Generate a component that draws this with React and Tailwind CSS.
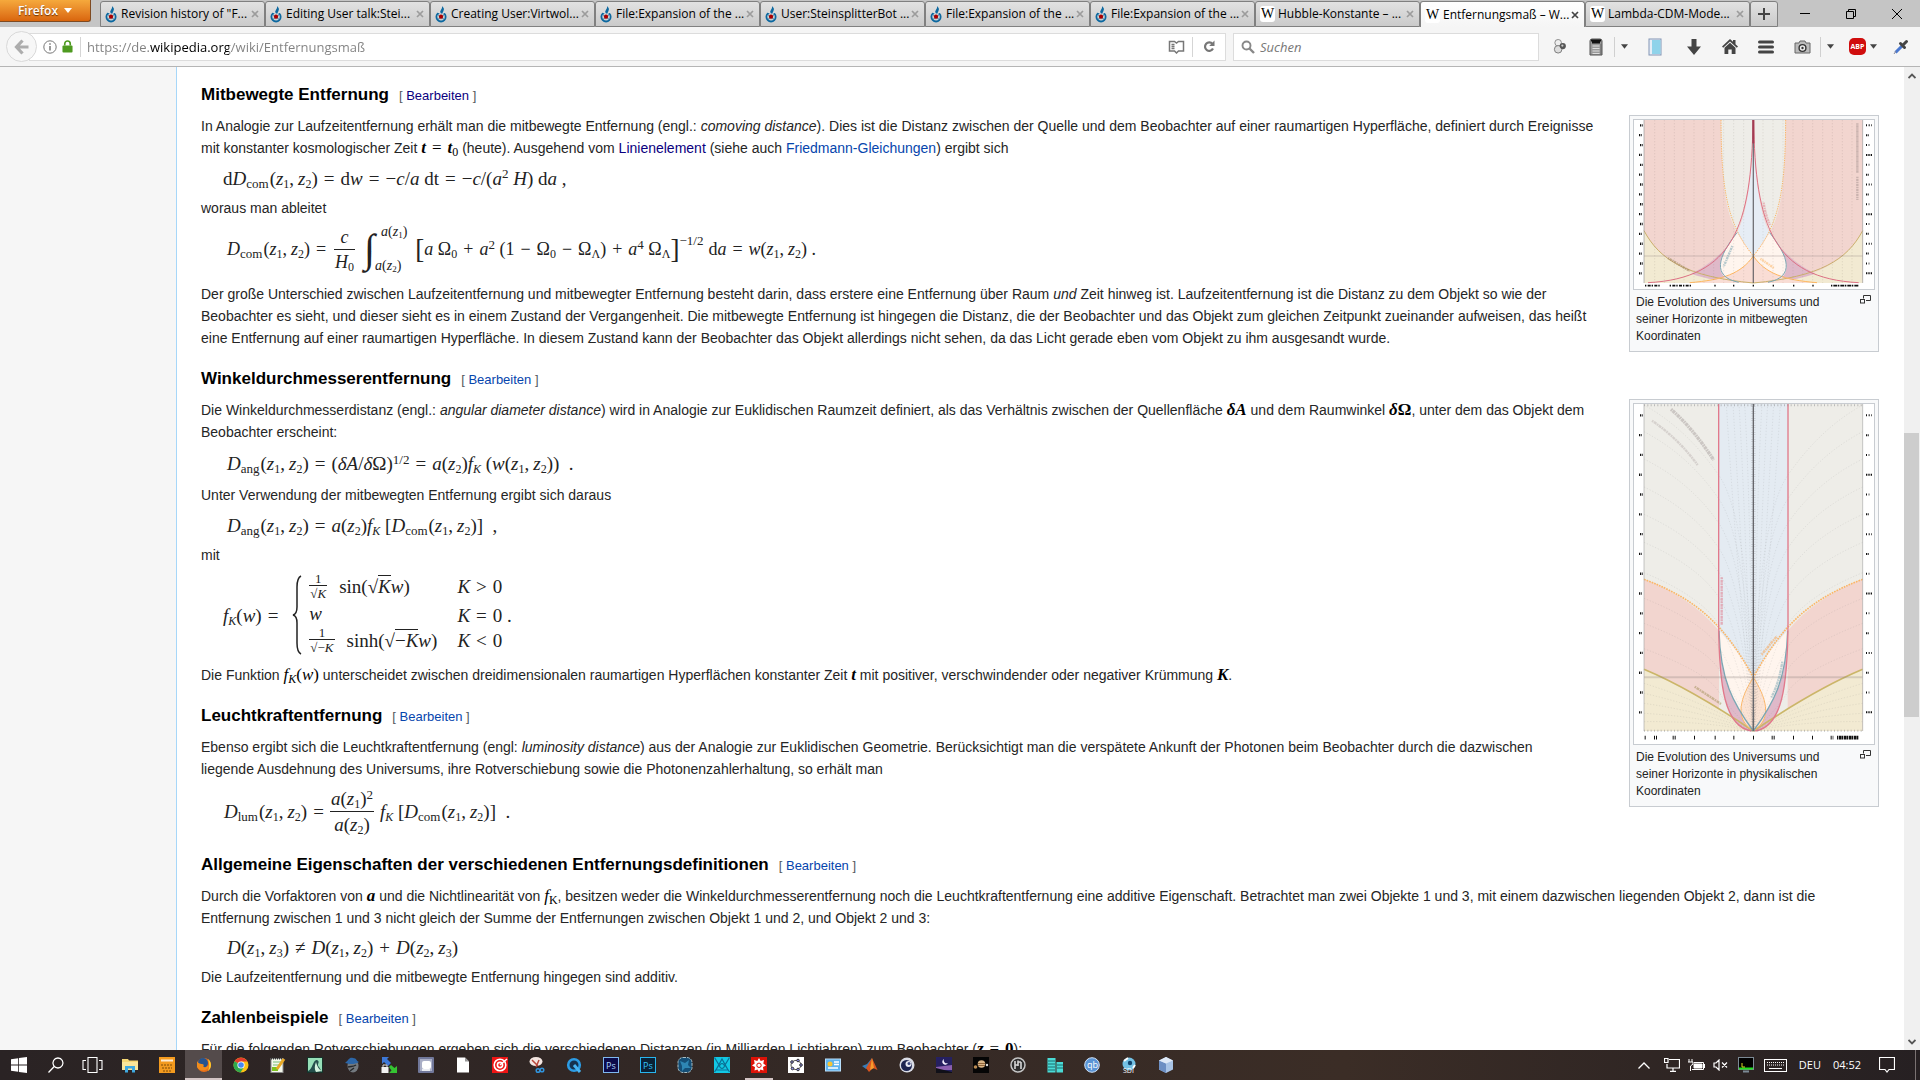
import React from "react";

/* ---------- browser chrome ---------- */

const tabs = [
  { icon: "c", title: 'Revision history of "F...' },
  { icon: "c", title: "Editing User talk:Stei..." },
  { icon: "c", title: "Creating User:Virtwol..." },
  { icon: "c", title: "File:Expansion of the ..." },
  { icon: "c", title: "User:SteinsplitterBot ..." },
  { icon: "c", title: "File:Expansion of the ..." },
  { icon: "c", title: "File:Expansion of the ..." },
  { icon: "w", title: "Hubble-Konstante – ..." },
  { icon: "w", title: "Entfernungsmaß – W...", active: true },
  { icon: "w", title: "Lambda-CDM-Mode..." },
];

function Commons() {
  return (
    <svg viewBox="1 0 13 18" className="h-[17px] w-[13px] shrink-0" aria-hidden="true">
      <circle cx="7" cy="11.5" r="4.9" fill="none" stroke="#0b68a0" strokeWidth="1.9" />
      <path d="M3 7 L8 9 L13 6 L11 5 L8.500 6.500 L5 5 Z" fill="#dcdcdc" />
      <path d="M7 8 C4.500 5 9 3.500 8 0 C12 3.500 9 5 8.600 8 Z" fill="#0b68a0" />
      <circle cx="7" cy="11.300" r="2.300" fill="#a00" />
      <path d="M3.500 9 l1.500 1 M10.500 9 l-1.500 1 M4 14 l1.500 -1 M10 14 l-1.500 -1" stroke="#0b68a0" />
    </svg>
  );
}

function WikiW() {
  return (
    <span className="flex h-4 w-[15px] shrink-0 items-center justify-center rounded-[3px] bg-white font-['Liberation_Serif',serif] text-[14px] leading-none text-black" aria-hidden="true">
      W
    </span>
  );
}

function Tab({ tab }) {
  return (
    <div
      className={
        "flex h-[26px] max-w-[165px] min-w-0 flex-1 items-center rounded-t-[3px] border-t border-r border-l pr-[5px] pl-[4px] " +
        (tab.active
          ? "border-[#808080] bg-linear-to-b from-white to-[#f5f5f5]"
          : "border-b border-[#808080] bg-linear-to-b from-[#e2e2e2] to-[#cacaca]")
      }
    >
      <button className="flex min-w-0 flex-1 items-center gap-[3px] text-left">
        {tab.icon === "c" ? <Commons /> : <WikiW />}
        <span className="text-[12px] leading-4 whitespace-nowrap text-black">{tab.title}</span>
      </button>
      <button aria-label="Tab schließen" className="flex h-3 w-2 shrink-0 items-center justify-center">
        <svg viewBox="0 0 8 8" className="h-2 w-2">
          <path d="M1 1 L7 7 M7 1 L1 7" stroke={tab.active ? "#444" : "#9c9c9c"} strokeWidth="1.7" />
        </svg>
      </button>
    </div>
  );
}

function TabBar() {
  return (
    <div className="flex h-[27px] shrink-0 items-start bg-[#c5c5c5]">
      <button className="mr-[9px] flex h-[22px] w-[91px] shrink-0 items-center justify-center gap-[6px] rounded-br-[3px] border-r border-b border-[#7e4a22] bg-linear-to-b from-[#f5a93c] to-[#d9650c] text-[12px] font-semibold text-white [text-shadow:0_1px_1px_#6b3305]">
        Firefox
        <svg viewBox="0 0 8 5" className="h-[5px] w-2"><path d="M0 0 H8 L4 5 Z" fill="#fff" /></svg>
      </button>
      <div className="flex min-w-0 flex-1 items-end pt-px">
        {tabs.map((t, i) => <Tab key={i} tab={t} />)}
        <button aria-label="Neuer Tab" className="flex h-[26px] w-7 shrink-0 items-center justify-center rounded-t-[3px] border border-[#808080] bg-linear-to-b from-[#e2e2e2] to-[#cacaca]">
          <svg viewBox="0 0 12 12" className="h-3 w-3"><path d="M6 0 V12 M0 6 H12" stroke="#444" strokeWidth="2" /></svg>
        </button>
      </div>
      <div className="flex h-[27px] shrink-0 items-center">
        <button aria-label="Minimieren" className="flex w-[46px] justify-center">
          <svg viewBox="0 0 10 10" className="h-[10px] w-[10px]"><path d="M0 4.500 H10" stroke="#000" /></svg>
        </button>
        <button aria-label="Verkleinern" className="flex w-[46px] justify-center">
          <svg viewBox="0 0 10 10" className="h-[10px] w-[10px]"><path d="M.5 2.500 H7.500 V9.500 H.5 Z M2.500 2.500 V.5 H9.500 V7.500 H7.500" fill="none" stroke="#000" /></svg>
        </button>
        <button aria-label="Schließen" className="flex w-[46px] justify-center">
          <svg viewBox="0 0 10 10" className="h-[10px] w-[10px]"><path d="M0 0 L10 10 M10 0 L0 10" stroke="#000" /></svg>
        </button>
      </div>
    </div>
  );
}

function Caret() {
  return <svg viewBox="0 0 8 5" className="h-[5px] w-[7px]"><path d="M0 0 H8 L4 5 Z" fill="#444" /></svg>;
}

const tool = "flex h-7 w-9 shrink-0 items-center justify-center";

function NavBar() {
  return (
    <div className="flex h-10 shrink-0 items-center border-b border-[#b5b5b5] bg-[#f5f5f5] pl-[6px]">
      <button aria-label="Zurück" className="z-10 flex h-[31px] w-[31px] shrink-0 items-center justify-center rounded-full border border-[#d9d9d9] bg-[#f7f7f7]">
        <svg viewBox="0 0 16 16" className="h-4 w-4"><path d="M8.500 1.500 L2.500 8 L8.500 14.500 M3 8 H14.500" fill="none" stroke="#adadad" strokeWidth="3.200" /></svg>
      </button>
      <div className="-ml-2 flex h-7 flex-1 items-center border border-[#dcdcdc] bg-white pl-[13px]">
        <svg viewBox="0 0 14 14" className="mr-[5px] h-[14px] w-[14px] shrink-0">
          <circle cx="7" cy="7" r="6.200" fill="none" stroke="#777" />
          <path d="M7 6 V10.500 M7 3.300 V4.800" stroke="#777" strokeWidth="1.500" />
        </svg>
        <svg viewBox="0 0 12 14" className="mr-[7px] h-[13px] w-[11px] shrink-0">
          <path d="M3 6 V4 a3 3 0 0 1 6 0 V6" fill="none" stroke="#4e9a20" strokeWidth="1.800" />
          <rect x="0.500" y="6" width="11" height="7.500" rx="1" fill="#4e9a20" />
        </svg>
        <span className="mr-[6px] h-5 w-px bg-[#d5d5d5]" />
        <input
          aria-label="Adresse"
          defaultValue="https://de.wikipedia.org/wiki/Entfernungsmaß"
          className="h-6 min-w-0 flex-1 bg-[linear-gradient(90deg,#808080_63px,#000_63px,#000_142px,#808080_142px)] bg-clip-text text-[13px] text-transparent caret-black outline-none"
        />
        <button aria-label="Leseansicht" className="flex w-8 justify-center">
          <svg viewBox="0 0 17 14" className="h-[14px] w-[17px]" fill="none" stroke="#777" strokeWidth="1.500">
            <path d="M1.500 1.500 H6.500 L8.500 3 L10.500 1.500 H15.500 V11 H10.500 L8.500 13 L6.500 11 H1.500 Z M3.500 4.500 H6.500 M3.500 6.500 H6.500 M3.500 8.500 H6.500" />
          </svg>
        </button>
        <span className="h-5 w-px bg-[#d5d5d5]" />
        <button aria-label="Neu laden" className="flex w-8 justify-center">
          <svg viewBox="0 0 12 13" className="h-[13px] w-3"><path d="M9.500 4 A4.200 4.200 0 1 0 10 8.500" fill="none" stroke="#777" strokeWidth="2.200" /><path d="M11.500 0.500 V6 H6.200 Z" fill="#777" /></svg>
        </button>
      </div>
      <label className="ml-[7px] flex h-7 w-[306px] items-center border border-[#dcdcdc] bg-white pl-[7px]">
        <svg viewBox="0 0 14 14" className="h-[14px] w-[14px]"><circle cx="5.500" cy="5.500" r="4" fill="none" stroke="#888" strokeWidth="1.900" /><path d="M8.500 8.500 L13 13" stroke="#888" strokeWidth="2.400" /></svg>
        <input aria-label="Suchen" placeholder="Suchen" className="ml-[5px] h-6 min-w-0 flex-1 text-[13px] italic outline-none placeholder:text-[#777]" />
      </label>
      <div className="flex items-center pl-[3px]">
        <button aria-label="Erweiterung" className={tool}>
          <svg viewBox="0 0 14 16" className="h-[15px] w-[14px]"><circle cx="5" cy="4" r="3.500" fill="#eee" stroke="#888" /><circle cx="5" cy="11" r="4" fill="#ddd" stroke="#777" /><circle cx="10" cy="7.500" r="3.300" fill="#555" /><circle cx="9.500" cy="7" r="1.200" fill="#ccc" /></svg>
        </button>
        <button aria-label="Gerät" className={tool}>
          <svg viewBox="0 0 14 18" className="h-[18px] w-[14px]"><path d="M1 3 Q1 1 3 1 H11 Q13 1 13 3 V17 H1 Z" fill="#9a9a9a" stroke="#555" /><path d="M2 2.500 H12 M3 4.500 H11" stroke="#111" strokeWidth="2" /><path d="M3.500 8 H10.500 M3.500 10.500 H10.500 M3.500 13 H10.500 M3.500 15.500 H10.500" stroke="#ddd" strokeWidth="1.200" /><path d="M12 6 V16.500" stroke="#666" /></svg>
        </button>
        <button aria-label="Gerät Menü" className="flex h-5 w-5 items-center justify-center border-l border-[#d0d0d0]"><Caret /></button>
        <button aria-label="Seitenleiste" className="flex h-7 w-[42px] items-center justify-center">
          <svg viewBox="0 0 14 18" className="h-[18px] w-[14px]"><rect x="1" y="1" width="12" height="16" fill="#e6edf6" stroke="#8295b5" /><rect x="4" y="2" width="8.500" height="14" fill="#8fd3ea" /></svg>
        </button>
        <button aria-label="Downloads" className={tool}>
          <svg viewBox="0 0 14 16" className="h-4 w-[14px]"><path d="M4.500 0 H9.500 V7.500 H14 L7 16 L0 7.500 H4.500 Z" fill="#444" /></svg>
        </button>
        <button aria-label="Startseite" className={tool}>
          <svg viewBox="0 0 16 15" className="h-[15px] w-4"><path d="M8 0 L11 2.800 V1 H13.500 V5.200 L16 7.600 L14.800 8.800 L8 2.400 L1.200 8.800 L0 7.600 Z" fill="#444" /><path d="M2.500 8.800 L8 3.800 L13.500 8.800 V15 H9.700 V10.500 H6.300 V15 H2.500 Z" fill="#444" /></svg>
        </button>
        <button aria-label="Menü" className={tool}>
          <svg viewBox="0 0 16 14" className="h-[14px] w-4"><path d="M1.500 2 H14.500 M1.500 7 H14.500 M1.500 12 H14.500" stroke="#444" strokeWidth="3" strokeLinecap="round" /></svg>
        </button>
        <button aria-label="Bildschirmfoto" className={tool}>
          <svg viewBox="0 0 17 14" className="h-[14px] w-[17px]"><path d="M1 3 H5 L6 1 H11 L12 3 H16 V13 H1 Z" fill="#bbb" stroke="#666" /><circle cx="8.500" cy="8" r="3.400" fill="#eee" stroke="#333" strokeWidth="1.400" /><circle cx="8.500" cy="8" r="1.200" fill="#333" /></svg>
        </button>
        <button aria-label="Bildschirmfoto Menü" className="flex h-5 w-5 items-center justify-center border-l border-[#d0d0d0]"><Caret /></button>
        <button aria-label="Adblock Plus" className="flex h-7 w-[42px] items-center justify-center gap-1 pl-1">
          <span className="flex h-[17px] w-[17px] items-center justify-center rounded-[5px] bg-[#d00d0d] text-[7px] leading-none font-bold text-white">ABP</span>
          <Caret />
        </button>
        <button aria-label="Pipette" className="flex h-7 w-[38px] items-center justify-center">
          <svg viewBox="0 0 16 16" className="h-4 w-4"><path d="M2.500 13.500 L9 7" stroke="#4a78d0" strokeWidth="3" /><path d="M1 15 L3 12" stroke="#889" /><path d="M7.500 4.500 L11.500 8.500 M10 6 L13.500 2.500" stroke="#444" strokeWidth="3" strokeLinecap="round" /></svg>
        </button>
      </div>
    </div>
  );
}

/* ---------- formulas ---------- */

function Eq({ className, children }) {
  return <div className={"flex items-center font-['Liberation_Serif',serif] leading-none whitespace-nowrap text-[#222] " + className}>{children}</div>;
}
const IM = ({ children }) => <span className="font-['Liberation_Serif',serif] text-[17px] leading-none whitespace-nowrap text-black">{children}</span>;
const V = ({ children }) => <i>{children}</i>;
const Sub = ({ children }) => <sub className="text-[12px]">{children}</sub>;
const Sup = ({ children }) => <sup className="text-[13px]">{children}</sup>;
const R = ({ children }) => <span className="mx-[6px]">{children}</span>;
const Z = ({ n }) => <><V>z</V><Sub>{n}</Sub></>;
const Pair = ({ a, b }) => <>(<Z n={a} /><span className="mr-1">,</span><Z n={b} />)</>;
const D = ({ n }) => <><V>D</V><sub className="mr-px text-[13px]">{n}</sub></>;
const FK = () => <><V>f</V><Sub><V>K</V></Sub></>;
const Root = ({ children }) => <>√<span className="border-t border-[#222]">{children}</span></>;

function Frac({ top, bottom, className = "" }) {
  return (
    <span className={"inline-flex flex-col items-center " + className}>
      <span className="px-px pb-[3px]">{top}</span>
      <span className="w-full border-t border-[#222] px-px pt-[3px] text-center">{bottom}</span>
    </span>
  );
}

function SmallFrac({ top, bottom }) {
  return (
    <span className="inline-flex flex-col items-center text-[13px] leading-[12px]">
      <span>{top}</span>
      <span className="w-full border-t border-[#222] px-px pt-[2px] text-center">{bottom}</span>
    </span>
  );
}

/* ---------- article ---------- */

function Heading({ visited, first, children }) {
  return (
    <h3 className={"mb-[5px] text-[17px] leading-[28px] font-bold text-black " + (first ? "mt-[14px]" : "mt-4")}>
      {children}
      <span className="ml-[10px] text-[13px] font-normal text-[#54595d]">
        [ <a href="#edit" className={visited ? "text-[#0b0080]" : "text-[#0645ad]"}>Bearbeiten</a> ]
      </span>
    </h3>
  );
}

const P = ({ children }) => <p className="leading-[22px]">{children}</p>;

function Thumb({ children, caption }) {
  return (
    <figure className="float-right clear-right mb-4 ml-[18px] w-[250px] border border-[#c8ccd1] bg-[#f8f9fa] p-[3px]">
      <div className="border border-[#c8ccd1] bg-white">{children}</div>
      <figcaption className="flex px-[3px] pt-1 pb-[3px] text-[12px] leading-[17px] text-[#222]">
        <span className="flex-1 pr-7">{caption}</span>
        <a href="#enlarge" aria-label="vergrößern" className="mt-px mr-px h-[9px]">
          <svg viewBox="0 0 11 9" className="h-[9px] w-[11px]" fill="none" stroke="#333"><path d="M3.500 3.500 V.5 H10.500 V5.500 H6" /><rect x="0.500" y="4.500" width="4" height="3.500" /></svg>
        </a>
      </figcaption>
    </figure>
  );
}

function AxisMarks({ top, bottom, step }) {
  const rows = [];
  for (let y = top; y < bottom; y += step) rows.push(y);
  return (
    <g stroke="#111">
      {rows.map((y, i) => (
        <g key={y}>
          <path d={`M${i % 2 ? 88 : 91} ${y} h8`} strokeWidth="7" strokeDasharray="3 2" />
          <path d={`M769 ${y} h${i % 3 ? 10 : 18}`} strokeWidth="6" strokeDasharray={i % 2 ? "3 2" : "3 5"} />
        </g>
      ))}
    </g>
  );
}

function ComovingChart() {
  const half = (
    <g>
      <path d="M103 392 C150 480 230 520 330 543 L431 549 H103 Z" fill="#f2ead2" />
      <path d="M334 60 C335 240 345 330 382 398 C400 350 430 240 431 60 Z" fill="#eeede8" />
      <path d="M431 60 C430 240 408 350 382 398 L431 468 Z" fill="#e6edf5" />
      <path d="M382 398 C355 450 290 500 245 521 C290 537 340 545 387 547 C310 525 325 470 382 398 Z" fill="#dfb9c9" />
      <path d="M382 398 C325 470 310 525 370 545 C395 520 415 495 431 468 Z" fill="#fff5ee" />
      <path d="M431 468 C395 520 340 540 250 549 H431 Z" fill="#f9ddd5" />
      <g fill="none" strokeWidth="3">
        <path d="M103 392 C150 480 230 530 431 549" stroke="#cbb06c" />
        <path d="M431 468 C395 520 340 540 240 548" stroke="#ffb760" />
        <path d="M334 60 C335 260 350 370 431 468" stroke="#fbb668" strokeDasharray="4 3" />
        <path d="M382 398 C325 470 305 530 387 547" stroke="#7ba6b4" />
        <path d="M430 60 C426 380 370 535 115 548" stroke="#de7184" />
      </g>
    </g>
  );
  const cols = [135, 164, 194, 223, 253, 283, 312, 342, 372, 402];
  return (
    <svg viewBox="73 60 720 507" className="block w-full" role="img" aria-label="Horizonte in mitbewegten Koordinaten">
      <rect x="103" y="60" width="656" height="489" fill="#f2d5cf" />
      {half}
      <g transform="translate(862 0) scale(-1 1)">{half}</g>
      <g stroke="#6b5a58" strokeOpacity=".2" strokeWidth="2" strokeDasharray="4 5">
        {cols.map((x) => <path key={x} d={`M${x} 60 V549 M${862 - x} 60 V549`} />)}
      </g>
      <path d="M103 468 H759" stroke="#8f8580" strokeOpacity=".25" strokeWidth="4" />
      <path d="M103 60 V549 M759 60 V549" stroke="#999" strokeWidth="2" />
      <path d="M431 60 V549" stroke="#55555a" strokeOpacity=".8" strokeWidth="4" />
      <path d="M431 60 V130" stroke="#a33b52" strokeWidth="6" />
      <g fill="none" strokeWidth="7" strokeOpacity=".55" strokeDasharray="4 2 7 2">
        <path d="M743 70 V218 M743 230 V300" stroke="#a99794" />
        <path d="M462 308 Q467 345 481 375" stroke="#e08692" />
        <path d="M175 474 L240 513" stroke="#9b8559" />
        <path d="M368 438 L342 500" stroke="#7ba6b4" />
        <path d="M452 476 L494 505" stroke="#fbb668" />
      </g>
      <AxisMarks top={76} bottom={540} step={29.600} />
      <g stroke="#111" strokeWidth="5"><path d="M106 557 h45 M180 557 h66" strokeDasharray="4 4 9 3" /><path d="M314 557 h4 M370 557 h4 M429 557 h4 M489 557 h4 M550 557 h4 M608 557 h4" /><path d="M664 557 h84" strokeDasharray="4 3 12 2" /></g>
    </svg>
  );
}

function PhysicalChart() {
  const half = (
    <g>
      <path d="M103 568 C200 605 270 655 328 722 V980 L431 1023 H103 Z" fill="#f2d5cf" />
      <path d="M103 838 Q240 900 431 1023 H103 Z" fill="#f2ead2" />
      <path d="M327 42 H431 V862 Q390 785 328 722 Z" fill="#e4ebf2" />
      <path d="M328 722 C330 890 345 1010 425 1023 H431 C370 940 332 870 328 722 Z" fill="#dfb9c9" />
      <path d="M328 722 Q390 785 431 862 V1023 C370 940 332 870 328 722 Z" fill="#fff5ee" />
      <path d="M431 862 C395 930 370 985 431 1023 Z" fill="#fbe3d4" />
      <g fill="none" stroke="#777" strokeOpacity=".2" strokeWidth="2" strokeDasharray="4 5">
        {[45, 125, 207, 291, 373, 457, 548, 625, 700, 776].map((y) => (
          <path key={y} d={`M103 ${y} Q${230 + (y - 45) / 12} ${y + 70} 327 ${y + 210 - (y - 45) / 9} T431 1023`} />
        ))}
        {[350, 370, 388, 405].map((x) => <path key={x} d={`M${x} 42 C${x + 20} 380 ${x + (431 - x) * 0.7} 800 431 1023`} />)}
        {[880, 910, 940, 970, 995].map((y) => <path key={y} d={`M103 ${y} Q280 ${(y + 990) / 2} 431 1023`} />)}
      </g>
      <g fill="none" strokeWidth="3">
        <path d="M103 838 Q240 895 431 1023" stroke="#cbb668" strokeWidth="5" />
        <path d="M431 862 C395 920 370 985 431 1023" stroke="#fbb668" />
        <path d="M103 568 C270 630 350 715 431 862" stroke="#fbb668" strokeWidth="5" strokeDasharray="5 3" />
        <path d="M328 722 C332 870 370 940 431 1023" stroke="#7ba6b4" strokeWidth="4" />
        <path d="M327 42 V700 C328 890 345 1010 425 1023" stroke="#e2798b" strokeWidth="4" />
      </g>
    </g>
  );
  return (
    <svg viewBox="73 42 720 1020" className="block w-full" role="img" aria-label="Horizonte in physikalischen Koordinaten">
      <rect x="103" y="42" width="656" height="981" fill="#eeede8" />
      {half}
      <g transform="translate(862 0) scale(-1 1)">{half}</g>
      <path d="M103 862 H759" stroke="#8f8580" strokeOpacity=".3" strokeWidth="6" />
      <path d="M431 42 V1023" stroke="#777" strokeOpacity=".3" strokeWidth="13" strokeDasharray="2 5" />
      <path d="M431 42 V1023" stroke="#66666b" strokeWidth="4" />
      <path d="M103 46 H759 M103 1022 H759" stroke="#888" strokeOpacity=".5" strokeWidth="6" strokeDasharray="3 7" />
      <path d="M103 42 V1023 M759 42 V1023" stroke="#aaa" strokeWidth="2" />
      <g fill="none" strokeWidth="7" strokeOpacity=".5" strokeDasharray="5 2 9 2">
        <path d="M184 58 Q250 115 312 210" stroke="#a79f9d" strokeWidth="10" />
        <path d="M127 92 Q205 145 264 225" stroke="#bdb5b3" />
        <path d="M336 562 V706" stroke="#df6f80" />
        <path d="M255 890 L334 942" stroke="#a28f57" />
        <path d="M456 794 L502 738" stroke="#fb9f48" />
        <path d="M518 815 Q508 880 484 924" stroke="#7ba6b4" />
      </g>
      <AxisMarks top={76} bottom={980} step={59.400} />
      <g stroke="#111" strokeWidth="11"><path d="M105 1043 h3 M133 1043 h9 M189 1043 h9 M253 1043 h3 M315 1043 h3 M371 1043 h4 M430 1043 h3 M486 1043 h9 M550 1043 h4 M607 1043 h4 M663 1043 h8" strokeDasharray="3 3" /><path d="M682 1043 h66" strokeDasharray="4 2 8 1" /></g>
    </svg>
  );
}

function Article() {
  return (
    <main className="min-w-0 flex-1 overflow-hidden border-l border-[#a7d7f9] bg-white pr-[25px] pl-6 text-[14px] text-[#252525]">
      <Heading first visited>Mitbewegte Entfernung</Heading>
      <Thumb caption="Die Evolution des Universums und seiner Horizonte in mitbewegten Koordinaten"><ComovingChart /></Thumb>
      <P>
        In Analogie zur Laufzeitentfernung erhält man die mitbewegte Entfernung (engl.: <i>comoving distance</i>). Dies ist die Distanz zwischen der Quelle und dem Beobachter auf einer raumartigen Hyperfläche, definiert durch Ereignisse mit konstanter kosmologischer Zeit <IM><b><V>t</V></b><R>=</R><b><V>t</V></b><Sub>0</Sub></IM> (heute). Ausgehend vom <a href="#linienelement" className="text-[#0b0080]">Linienelement</a> (siehe auch <a href="#friedmann" className="text-[#0645ad]">Friedmann-Gleichungen</a>) ergibt sich
      </P>
      <Eq className="h-[38px] pl-[22px] text-[19px]">
        <span>d<D n="com" /><Pair a="1" b="2" /><R>=</R>d<V>w</V><R>=</R>−<V>c</V>/<V>a</V> dt<R>=</R>−<V>c</V>/(<V>a</V><Sup>2</Sup> <V>H</V>) d<V>a</V> ,</span>
      </Eq>
      <P>woraus man ableitet</P>
      <Eq className="h-[64px] pb-1 pl-[26px] text-[18px]">
        <span><D n="com" /><Pair a="1" b="2" /><R>=</R></span>
        <Frac className="mr-[9px] ml-[2px]" top={<V>c</V>} bottom={<><V>H</V><Sub>0</Sub></>} />
        <span className="text-[40px]">∫</span>
        <span className="mr-[8px] ml-[6px] flex h-[48px] flex-col justify-between text-[14px]">
          <span><V>a</V>(<V>z</V><sub className="text-[9px]">1</sub>)</span>
          <span className="-ml-[6px]"><V>a</V>(<V>z</V><sub className="text-[9px]">2</sub>)</span>
        </span>
        <span className="text-[27px]">[</span>
        <span><V>a</V> Ω<Sub>0</Sub><R>+</R><V>a</V><Sup>2</Sup> (1<R>−</R>Ω<Sub>0</Sub><R>−</R>Ω<Sub>Λ</Sub>)<R>+</R><V>a</V><Sup>4</Sup> Ω<Sub>Λ</Sub></span>
        <span className="text-[27px]">]</span>
        <span className="mb-[18px] text-[13px]">−1/2</span>
        <span className="ml-[5px]">d<V>a</V><R>=</R><V>w</V><Pair a="1" b="2" /> .</span>
      </Eq>
      <P>
        Der große Unterschied zwischen Laufzeitentfernung und mitbewegter Entfernung besteht darin, dass erstere eine Entfernung über Raum <i>und</i> Zeit hinweg ist. Laufzeitentfernung ist die Distanz zu dem Objekt so wie der Beobachter es sieht, und dieser sieht es in einem Zustand der Vergangenheit. Die mitbewegte Entfernung ist hingegen die Distanz, die der Beobachter und das Objekt zum gleichen Zeitpunkt zueinander aufweisen, das heißt eine Entfernung auf einer raumartigen Hyperfläche. In diesem Zustand kann der Beobachter das Objekt allerdings nicht sehen, da das Licht gerade eben vom Objekt zu ihm ausgesandt wurde.
      </P>

      <Heading>Winkeldurchmesserentfernung</Heading>
      <Thumb caption="Die Evolution des Universums und seiner Horizonte in physikalischen Koordinaten"><PhysicalChart /></Thumb>
      <P>
        Die Winkeldurchmesserdistanz (engl.: <i>angular diameter distance</i>) wird in Analogie zur Euklidischen Raumzeit definiert, als das Verhältnis zwischen der Quellenfläche <IM><b><V>δA</V></b></IM> und dem Raumwinkel <IM><b><V>δ</V>Ω</b></IM>, unter dem das Objekt dem Beobachter erscheint:
      </P>
      <Eq className="h-[41px] pl-[26px] text-[19px]">
        <span><D n="ang" /><Pair a="1" b="2" /><R>=</R>(<V>δA</V>/<V>δ</V>Ω)<Sup>1/2</Sup><R>=</R><V>a</V>(<Z n="2" />)<FK /> (<V>w</V><Pair a="1" b="2" />)&nbsp; .</span>
      </Eq>
      <P>Unter Verwendung der mitbewegten Entfernung ergibt sich daraus</P>
      <Eq className="h-[38px] pl-[26px] text-[19px]">
        <span><D n="ang" /><Pair a="1" b="2" /><R>=</R><V>a</V>(<Z n="2" />)<FK /> [<D n="com" /><Pair a="1" b="2" />]&nbsp; ,</span>
      </Eq>
      <P>mit</P>
      <Eq className="h-[98px] pl-[22px] text-[19px]">
        <span><FK />(<V>w</V>)<R>=</R></span>
        <svg viewBox="0 0 10 80" className="ml-2 h-[80px] w-[10px]" fill="none" stroke="#222" strokeWidth="1.500"><path d="M9 1 Q5 3 5 12 V32 Q5 39 1 40 Q5 41 5 48 V68 Q5 77 9 79" /></svg>
        <div className="ml-[7px] grid grid-cols-[auto_auto] items-center gap-x-5">
          <span className="flex h-[34px] items-center gap-3"><SmallFrac top="1" bottom={<Root><V>K</V></Root>} /><span>sin(<Root><V>K</V></Root><V>w</V>)</span></span>
          <span><V>K</V><R>&gt;</R>0</span>
          <span className="flex h-[24px] items-center pb-1"><V>w</V></span>
          <span><V>K</V><R>=</R>0 .</span>
          <span className="flex h-[34px] items-center gap-3 pb-2"><SmallFrac top="1" bottom={<Root>−<V>K</V></Root>} /><span>sinh(<Root>−<V>K</V></Root><V>w</V>)</span></span>
          <span className="pb-2"><V>K</V><R>&lt;</R>0</span>
        </div>
      </Eq>
      <P>Die Funktion <IM><FK />(<V>w</V>)</IM> unterscheidet zwischen dreidimensionalen raumartigen Hyperflächen konstanter Zeit <IM><b><V>t</V></b></IM> mit positiver, verschwindender oder negativer Krümmung <IM><b><V>K</V></b></IM>.</P>

      <Heading>Leuchtkraftentfernung</Heading>
      <P>
        Ebenso ergibt sich die Leuchtkraftentfernung (engl: <i>luminosity distance</i>) aus der Analogie zur Euklidischen Geometrie. Berücksichtigt man die verspätete Ankunft der Photonen beim Beobachter durch die dazwischen<br />liegende Ausdehnung des Universums, ihre Rotverschiebung sowie die Photonenzahlerhaltung, so erhält man
      </P>
      <Eq className="h-[55px] pt-[8px] pl-[23px] text-[19px]">
        <span><D n="lum" /><Pair a="1" b="2" /><R>=</R></span>
        <Frac top={<><V>a</V>(<Z n="1" />)<Sup>2</Sup></>} bottom={<><V>a</V>(<Z n="2" />)</>} />
        <span className="ml-[6px]"><FK /> [<D n="com" /><Pair a="1" b="2" />]&nbsp; .</span>
      </Eq>

      <Heading>Allgemeine Eigenschaften der verschiedenen Entfernungsdefinitionen</Heading>
      <P>
        Durch die Vorfaktoren von <IM><b><V>a</V></b></IM> und die Nichtlinearität von <IM><V>f</V><Sub>K</Sub></IM>, besitzen weder die Winkeldurchmesserentfernung noch die Leuchtkraftentfernung eine additive Eigenschaft. Betrachtet man zwei Objekte 1 und 3, mit einem dazwischen liegenden Objekt 2, dann ist die Entfernung zwischen 1 und 3 nicht gleich der Summe der Entfernungen zwischen Objekt 1 und 2, und Objekt 2 und 3:
      </P>
      <Eq className="h-[37px] pl-[26px] text-[19px]">
        <span><V>D</V><Pair a="1" b="3" /><R>≠</R><V>D</V><Pair a="1" b="2" /><R>+</R><V>D</V><Pair a="2" b="3" /></span>
      </Eq>
      <P>Die Laufzeitentfernung und die mitbewegte Entfernung hingegen sind additiv.</P>

      <Heading>Zahlenbeispiele</Heading>
      <P>Für die folgenden Rotverschiebungen ergeben sich die verschiedenen Distanzen (in Milliarden Lichtjahren) zum Beobachter (<IM><b><V>z</V></b><R>=</R><b>0</b></IM>):</P>
    </main>
  );
}

function Scrollbar() {
  return (
    <div className="flex w-4 shrink-0 flex-col bg-[#f0f0f0]">
      <button aria-label="Nach oben" className="flex h-[17px] items-center justify-center"><svg viewBox="0 0 8 6" className="h-[6px] w-2"><path d="M0.500 5 L4 1.500 L7.500 5" fill="none" stroke="#555" strokeWidth="1.800" /></svg></button>
      <span className="flex-[349]" />
      <span className="mr-px flex-[284] bg-[#cdcdcd]" />
      <span className="flex-[316]" />
      <button aria-label="Nach unten" className="flex h-[17px] items-center justify-center"><svg viewBox="0 0 8 6" className="h-[6px] w-2"><path d="M0.500 1 L4 4.500 L7.500 1" fill="none" stroke="#555" strokeWidth="1.800" /></svg></button>
    </div>
  );
}

/* ---------- taskbar ---------- */

const apps = [
  ["Start", <path key="a" d="M0 2.300 L7.200 1.200 V7.600 H0 Z M8 1.100 L16 0 V7.600 H8 Z M0 8.400 H7.200 V14.800 L0 13.700 Z M8 8.400 H16 V16 L8 14.900 Z" fill="#fff" />],
  ["Suche", <path key="a" d="M10 1 a5 5 0 1 1 -.1 0 Z M6.200 9.500 L0.500 15.500" fill="none" stroke="#fff" strokeWidth="1.300" />],
  ["Taskansicht", <path key="a" d="M3 .5 H12 V15.500 H3 Z M1 3.500 H-2 V12.500 H1 M14 3.500 H17 V12.500 H14" fill="none" stroke="#fff" strokeWidth="1.100" />],
  ["Explorer", <g key="a"><path d="M0 2 H6 L7 3.500 H16 V13 H0 Z" fill="#f6d774" /><path d="M0 5 H16 V13 H0 Z" fill="#fbe69a" /><path d="M3 15.500 V9 H13 V15.500 H10 V11.500 H6 V15.500 Z" fill="#3fa9e0" /></g>],
  ["Orange", <g key="a"><rect width="16" height="16" fill="#f39a1e" /><path d="M2 3.500 H14" stroke="#fff" strokeWidth="2" strokeOpacity=".8" /><path d="M2 8 H14 M3 11 H13 M4 14 H12" stroke="#7a4a08" strokeDasharray="2 1" /></g>],
  ["Firefox", <g key="a"><circle cx="8" cy="8" r="7" fill="#e8701a" /><circle cx="7" cy="6" r="5" fill="#25548f" /><path d="M1 4 C3 8 6 6 8 8 C6 10 9 12 13 8 C14 13 4 16 1 10 Z" fill="#f08c1c" /><path d="M12 2 C16 5 16 11 12 14 C14 9 13 6 12 2 Z" fill="#fdc92b" /></g>],
  ["Chrome", <g key="a"><circle cx="8" cy="8" r="7.500" fill="#fbc116" /><path d="M8 8 L1.500 4.300 A7.500 7.500 0 0 1 14.500 4.500 H8 Z" fill="#e33b2e" /><path d="M8 8 L1.500 4.200 A7.500 7.500 0 0 0 7.500 15.500 L11 10 Z" fill="#2da94f" /><circle cx="8" cy="8" r="3.600" fill="#fff" /><circle cx="8" cy="8" r="2.800" fill="#4587f3" /></g>],
  ["Notepad++", <g key="a"><rect x="1" y="1.500" width="12" height="14" fill="#f4f8ec" stroke="#888" /><path d="M3 5 H11 M3 8 H9" stroke="#7b7" /><path d="M2 10 H8 V14 H2 Z" fill="#7ec21f" /><path d="M7 12 L14 2" stroke="#e9a825" strokeWidth="3" /><path d="M1 1.500 H13" stroke="#333" strokeWidth="2" strokeDasharray="1 1" /></g>],
  ["Aurora", <g key="a"><rect x="0.500" y="0.500" width="15" height="15" fill="#97e0b8" stroke="#16332a" /><path d="M1 14 C6 12 6 2 10 3 C14 5 9 7 12 10 L15 15 H1 Z" fill="#25504c" /><path d="M9 5 C10 9 12 13 15 14 L9 15 C7 11 8 8 9 5" fill="#d5f5e0" /></g>],
  ["Hut", <g key="a"><ellipse cx="9" cy="9" rx="5.500" ry="6.500" fill="#73797f" /><path d="M1 6 C5 3 5 0 9 1 C13 1 12 4 15 5 C10 8 5 7 1 6 Z" fill="#2c66a8" /><path d="M4 10 C7 9 9 10 12 8 M6 14 L10 11" stroke="#26292c" strokeWidth="1.500" fill="none" /></g>],
  ["Sync", <g key="a"><path d="M1 0 H8 L6 2 L10 6 L7 9 L3 5 L1 7 Z" fill="#3d78d8" /><path d="M16 16 H8 L10.500 13.500 L8 10 L10 8 L13.500 11 L16 9 Z" fill="#35c432" /><rect x="0.500" y="10" width="7" height="6" fill="#f2f2f2" /><path d="M2 10 V8 H6 V10" stroke="#ddd" fill="none" /></g>],
  ["Kamera", <g key="a"><rect width="16" height="16" rx="1" fill="#71789a" /><rect x="2" y="2" width="12" height="12" fill="#a9aec6" /><rect x="4" y="4" width="9" height="8" rx="2" fill="#fff" /><path d="M4 13 H12" stroke="#fff" strokeWidth="1.500" /></g>],
  ["LibreOffice", <g key="a"><path d="M2 0.500 H10 L14 4.500 V15.500 H2 Z" fill="#fff" /><path d="M10 0.500 V4.500 H14 Z" fill="#999" /></g>],
  ["Ziel", <g key="a"><rect width="16" height="16" fill="#ee1515" /><g fill="none" stroke="#fff" strokeWidth="1.600"><circle cx="8" cy="8" r="5.800" /><circle cx="8" cy="8" r="2.600" /></g><path d="M8 8 L15 2" stroke="#fff" strokeWidth="1.500" /></g>],
  ["Snipping", <g key="a"><ellipse cx="7" cy="4.500" rx="6.500" ry="4.500" fill="#f3e6e2" /><path d="M3 3 L9 9 M10 3 L7 10" stroke="#b6473a" strokeWidth="1.500" /><circle cx="9" cy="13.500" r="1.800" fill="none" stroke="#3193db" strokeWidth="1.500" /><circle cx="13" cy="13" r="1.800" fill="none" stroke="#3193db" strokeWidth="1.500" /></g>],
  ["QuickTime", <g key="a"><circle cx="8" cy="8" r="5.800" fill="#16324f" stroke="#2c9ce4" strokeWidth="2.600" /><path d="M8 8 L14 15" stroke="#47b5f4" strokeWidth="3" /></g>],
  ["Photoshop", <g key="a"><rect x="0.500" y="0.500" width="15" height="15" fill="#0c0b4a" stroke="#7fb8ef" /><text x="3" y="11.500" fontSize="9" fill="#a9d3fa">Ps</text></g>],
  ["Photoshop CC", <g key="a"><rect x="0.500" y="0.500" width="15" height="15" fill="#0a2236" stroke="#28b5ee" /><text x="3" y="11.500" fontSize="9" fill="#35c3fa">Ps</text></g>],
  ["Globus", <g key="a"><rect x="1" y="0.500" width="14" height="15" rx="5" fill="#154f77" stroke="#a8c0c8" strokeDasharray="3 1" /><path d="M3 4 L8 6 L12 3 L11 8 L14 11 L8 11 L5 14 L5 9 Z" fill="#2e86b4" /></g>],
  ["Cyan", <g key="a"><rect width="16" height="16" fill="#12c8e4" /><path d="M8 2 L14 13 H2 Z M0.500 .5 L5 8 L.5 15 M15.500 .5 L11 8 L15.500 15" fill="none" stroke="#0a6f96" strokeWidth="1.200" /><circle cx="8" cy="9" r="2.400" fill="#12c8e4" stroke="#075d80" /></g>],
  ["Mathematica", <g key="a"><rect width="16" height="16" fill="#dd1207" /><path d="M8 1 L9.700 4 L13 3 L12.300 6.500 L15 8.500 L12 10 L12.500 13.500 L9.500 12.500 L8 15 L6.500 12.500 L3.500 13.500 L4 10 L1 8.500 L3.700 6.500 L3 3 L6.300 4 Z" fill="#fff" /><circle cx="8" cy="8.300" r="2.200" fill="none" stroke="#dd1207" /></g>],
  ["GeoGebra", <g key="a"><rect width="16" height="16" fill="#fff" /><ellipse cx="8" cy="8" rx="5" ry="4.600" fill="none" stroke="#555" /><g fill="#8d8df0" stroke="#333"><circle cx="4" cy="5" r="1.300" /><circle cx="10" cy="3.500" r="1.300" /><circle cx="13" cy="8" r="1.300" /><circle cx="10" cy="12.500" r="1.300" /><circle cx="4.500" cy="11.500" r="1.300" /></g></g>],
  ["Präsentation", <g key="a"><rect x="0.500" y="2" width="15" height="12" fill="#5db3ef" stroke="#b9dffb" /><circle cx="5" cy="7" r="2.500" fill="#f6c433" /><path d="M9 5 H14 M9 7.500 H14 M3 11 H13" stroke="#fff" strokeWidth="1.500" /></g>],
  ["MATLAB", <g key="a"><path d="M0 9 L5 7 L10 1 L8 10 L4 12 Z" fill="#377cb8" /><path d="M10 1 L15.500 13 L11 11 L7 15 L4 11 Z" fill="#d9541e" /><path d="M10 1 L12 11 L8 13 Z" fill="#f59b2d" /></g>],
  ["Cinema 4D", <g key="a"><circle cx="8" cy="8" r="7.500" fill="#d9dce6" /><circle cx="7.500" cy="8.500" r="5.500" fill="#1b2350" /><circle cx="9.500" cy="7" r="3" fill="#e6e9f3" /><circle cx="10" cy="6.500" r="1.500" fill="#38447c" /></g>],
  ["Stellarium", <g key="a"><rect width="16" height="16" fill="#252060" /><path d="M0 10 L16 8 V13 H0 Z" fill="#8b5fb0" /><path d="M0 11 L16 15 V16 H0 Z" fill="#101018" /><path d="M8 2 a3 3 0 1 0 4 4 a3 3 0 0 1 -4 -4" fill="#f4efff" /></g>],
  ["Planeten", <g key="a"><rect width="16" height="16" fill="#050505" /><circle cx="8.500" cy="7" r="3.800" fill="#d7b486" /><path d="M5 6.500 H12 M5 8.500 H12" stroke="#91663c" /><circle cx="2.500" cy="10" r="1.800" fill="#b98a52" /><circle cx="14" cy="8" r="1.200" fill="#ddd" /></g>],
  ["Globus 2", <g key="a"><circle cx="8" cy="8" r="7" fill="#2e2e2e" stroke="#c5c5c5" strokeWidth="1.500" /><path d="M5 4 V12 M8 3.500 V9 M11 5 V12 M5 8 H8 M8 5 H11" stroke="#d5d5d5" strokeWidth="1.600" /></g>],
  ["Gebäude", <g key="a"><rect x="0.500" y="1" width="8" height="14.500" fill="#4adbd6" /><rect x="9.500" y="5" width="6.500" height="10.500" fill="#4adbd6" /><path d="M1 4 H8 M1 7 H8 M1 10 H8 M1 13 H8 M10 8 H16 M10 11 H16" stroke="#1b6e70" /></g>],
  ["qBittorrent", <g key="a"><circle cx="8" cy="8" r="7.300" fill="#5a94d5" stroke="#cfe2f7" /><text x="3" y="11" fontSize="9" fill="#fff">qb</text></g>],
  ["SDI", <g key="a"><circle cx="8" cy="7" r="6.500" fill="#73c1e4" /><circle cx="9" cy="6" r="2.200" fill="#10456f" /><path d="M3 4 L7 1 M12 11 L14 8" stroke="#fff" strokeWidth="2" /><text x="2" y="15.500" fontSize="7" fill="#fff">SDI</text></g>],
  ["VirtualBox", <g key="a"><path d="M8 0 L15 3.500 V12.500 L8 16 L1 12.500 V3.500 Z" fill="#a9c4e6" /><path d="M1 3.500 L8 6.500 V16 L1 12.500 Z" fill="#6d8fc3" /><path d="M1 3.500 L8 0 L15 3.500 L8 6.500 Z" fill="#dfe9f7" /></g>],
];

function TaskBar() {
  return (
    <footer className="flex h-[30px] shrink-0 items-center bg-linear-to-r from-[#2a2324] via-[#3b2d26] via-70% to-[#262022]">
      {apps.map(([name, art]) => (
        <button
          key={name}
          aria-label={name}
          className={"flex h-[30px] w-[37px] shrink-0 items-center justify-center " + (name === "Firefox" ? "border-b-2 border-[#d3c5c5] bg-[#544b4b] pt-[2px]" : "")}
        >
          <span className={"flex h-[30px] items-center px-[6px] " + (name === "Mathematica" ? "border-b-2 border-[#d3c5c5] pt-[2px]" : "")}>
            <svg viewBox="0 0 16 16" className="h-4 w-4 overflow-visible">{art}</svg>
          </span>
        </button>
      ))}
      <div className="ml-auto flex h-full items-center text-[11px] text-white">
        <svg viewBox="0 0 12 7" className="mr-[14px] h-[7px] w-3"><path d="M.5 6.500 L6 1 L11.500 6.500" fill="none" stroke="#fff" strokeWidth="1.300" /></svg>
        <svg viewBox="0 0 16 14" className="mr-[8px] h-[14px] w-4" fill="none" stroke="#fff" strokeWidth="1.200"><path d="M5 1.500 H15.500 V10 H3 V6 M9 10 V13 M6 13.300 H12" /><path d="M.5 .5 H4 V4.500 H.5 Z" /></svg>
        <svg viewBox="0 0 17 13" className="mr-[8px] h-[13px] w-[17px]" fill="none" stroke="#fff"><path d="M6 3.500 H15.500 V10.500 H4 M16.500 5 V9" /><path d="M6 5 H14 V9 H6 Z" fill="#fff" /><path d="M1 0 V3 M4 0 V3 M0 3 H5 V5 L2.500 7 V12" /></svg>
        <svg viewBox="0 0 15 12" className="mr-[10px] h-3 w-[15px]" fill="none" stroke="#fff" strokeWidth="1.200"><path d="M1 4 H3 L6 1 V11 L3 8 H1 Z M9 3.500 L14 8.500 M14 3.500 L9 8.500" /></svg>
        <svg viewBox="0 0 16 16" className="mr-[10px] h-4 w-4"><rect x="0.500" y="0.500" width="15" height="12" fill="#000" stroke="#7c8a95" /><path d="M1 11.500 H15" stroke="#1fe01f" strokeWidth="2" /><path d="M4 6 V10 H7" stroke="#d8d820" fill="none" /><path d="M5 14.500 H11" stroke="#7c8a95" strokeWidth="2" /></svg>
        <svg viewBox="0 0 23 13" className="mr-3 h-[13px] w-[23px]" fill="none" stroke="#fff"><rect x="0.500" y="0.500" width="22" height="12" /><path d="M3 3.500 H20 M3 6 H20" strokeDasharray="1 1" /><path d="M5 9.500 H18" /></svg>
        <span className="mr-3">DEU</span>
        <span className="mr-[18px]">04:52</span>
        <svg viewBox="0 0 16 16" className="mr-5 h-4 w-4"><path d="M.5 .5 H15.500 V12.500 H10 L8 15 L6 12.500 H.5 Z" fill="none" stroke="#fff" strokeWidth="1.200" /></svg>
        <span className="mr-1 h-full w-px bg-[#7a7272]" />
      </div>
    </footer>
  );
}

export default function App() {
  return (
    <div className="flex h-screen flex-col overflow-hidden font-['Open_Sans',sans-serif]">
      <TabBar />
      <NavBar />
      <div className="flex min-h-0 flex-1 font-['Liberation_Sans',Arial,sans-serif]">
        <aside className="w-44 shrink-0 bg-[#f6f6f6]" />
        <Article />
        <Scrollbar />
      </div>
      <TaskBar />
    </div>
  );
}
